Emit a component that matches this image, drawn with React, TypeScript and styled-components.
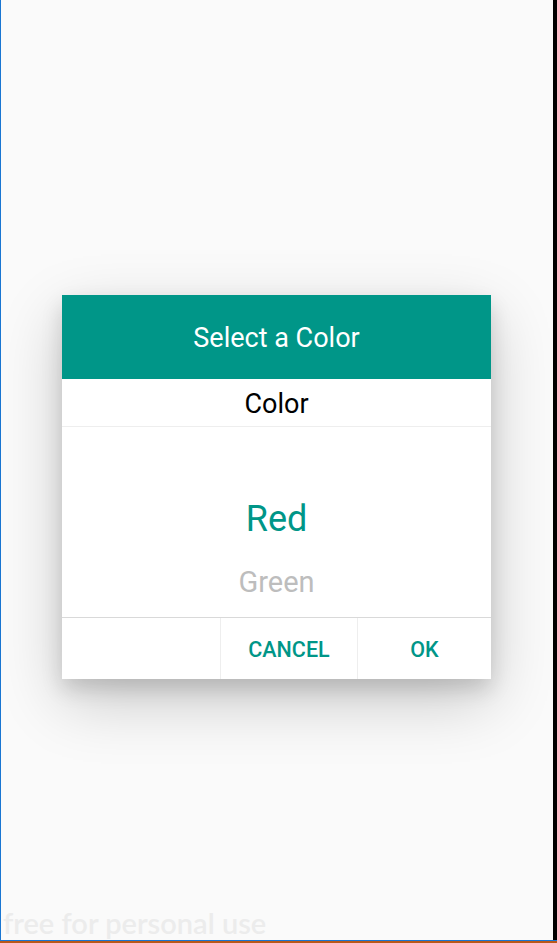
import React from "react";
import styled, { createGlobalStyle } from "styled-components";

const GlobalStyle = createGlobalStyle`
  html, body {
    margin: 0;
    padding: 0;
    background: #fafafa;
    font-family: Roboto, "Liberation Sans", sans-serif;
  }
  * { box-sizing: border-box; }
`;

/* Device frame: orange base line under a thin blue edge */
const Screen = styled.div`
  width: 557px;
  height: 943px;
  display: flex;
  flex-direction: column;
  border-bottom: 2px solid #b9581b;
  overflow: hidden;
`;

const Frame = styled.div`
  flex: 1;
  display: flex;
  flex-direction: column;
  border-bottom: 1px solid #1976d2;
  min-height: 0;
`;

const Viewport = styled.div`
  flex: 1;
  display: flex;
  flex-direction: column;
  align-items: flex-start;
  border-left: 1px solid #1976d2;
  border-right: 4px solid #000;
  background: #fafafa;
  min-height: 0;
`;

const Dialog = styled.div`
  margin: 295px 0 0 61px;
  width: 429px;
  background: #fff;
  display: flex;
  flex-direction: column;
  box-shadow: 0 22px 60px rgba(0, 0, 0, 0.2), 0 10px 20px rgba(0, 0, 0, 0.14);
`;

const Header = styled.div`
  height: 84px;
  padding-top: 2px;
  background: #009688;
  color: #fff;
  display: flex;
  align-items: center;
  justify-content: center;
  font-size: 27px;
  font-weight: 400;
`;

const Subtitle = styled.div`
  height: 48px;
  padding-top: 2px;
  border-bottom: 1px solid #eeeeee;
  display: flex;
  align-items: center;
  justify-content: center;
  font-size: 27px;
  color: #000;
`;

const Picker = styled.div`
  height: 191px;
  border-bottom: 1px solid #d9d9d9;
  display: flex;
  flex-direction: column;
  align-items: center;
  padding-top: 65px;
`;

const Option = styled.div<{ $selected?: boolean }>`
  font-size: ${(p) => (p.$selected ? "36px" : "29px")};
  color: ${(p) => (p.$selected ? "#009688" : "#bdbdbd")};
  line-height: ${(p) => (p.$selected ? "54px" : "40px")};
  margin-bottom: ${(p) => (p.$selected ? "16px" : "0")};
`;

const Actions = styled.div`
  height: 61px;
  display: grid;
  grid-template-columns: 158px 137px 1fr;
`;

const Action = styled.div<{ $divider?: boolean }>`
  display: flex;
  align-items: center;
  justify-content: center;
  padding-top: 1px;
  border-left: ${(p) => (p.$divider ? "1px solid #eeeeee" : "none")};
  color: #009688;
  font-size: 21.5px;
  font-weight: 500;
`;

const Watermark = styled.div`
  margin-top: auto;
  margin-bottom: 3px;
  padding-left: 2px;
  font-family: Lato, "Open Sans", sans-serif;
  font-weight: 600;
  font-size: 29px;
  line-height: 29px;
  color: #ececec;
  white-space: nowrap;
`;

export default function App() {
  return (
    <>
      <GlobalStyle />
      <Screen>
        <Frame>
          <Viewport>
            <Dialog>
              <Header>Select a Color</Header>
              <Subtitle>Color</Subtitle>
              <Picker>
                <Option $selected>Red</Option>
                <Option>Green</Option>
              </Picker>
              <Actions>
                <Action />
                <Action $divider>CANCEL</Action>
                <Action $divider>OK</Action>
              </Actions>
            </Dialog>
            <Watermark>free for personal use</Watermark>
          </Viewport>
        </Frame>
      </Screen>
    </>
  );
}
